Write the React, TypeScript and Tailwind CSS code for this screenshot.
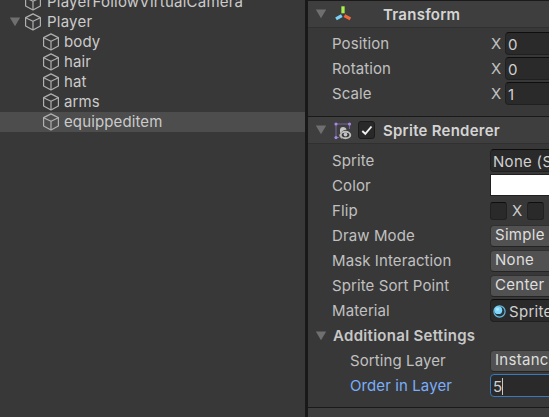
import type { ReactNode } from 'react';

function Fold({ className = '' }: { className?: string }) {
  return (
    <svg className={`h-[10px] w-[12px] shrink-0 ${className}`} viewBox="0 0 12 10">
      <path d="M.8 .6H11.2L6 9.3Z" fill="#6f6f6f" />
    </svg>
  );
}

function Cube() {
  return (
    <svg className="h-[18px] w-[18px] shrink-0" viewBox="0 0 18 18" fill="none" stroke="#b0b0b0" strokeWidth="1.2" strokeLinejoin="round">
      <path d="M9 .9L16.4 4.6V13L9 17L1.6 13V4.6Z" />
      <path d="M1.6 4.8L9 8.2L16.4 4.8M9 8.2V17" />
    </svg>
  );
}

function TransformIcon() {
  return (
    <svg className="h-[20px] w-[20px] shrink-0" viewBox="0 0 20 20" strokeWidth="3.3">
      <path d="M10 2.3V9.3" stroke="#a9f04d" />
      <path d="M8.8 11.6L3 14.9" stroke="#7bd0f5" />
      <path d="M11.4 11.6L17.4 14.9" stroke="#f0693c" />
    </svg>
  );
}

function SpriteIcon() {
  return (
    <svg className="h-[18px] w-[18px] shrink-0" viewBox="0 0 18 18">
      <path d="M2 2H15.5V7M2 2V15.5H5" fill="none" stroke="#79629f" strokeWidth="1.1" />
      <g fill="#a788e8">
        <circle cx="2" cy="2" r="1.6" />
        <circle cx="15.5" cy="2" r="1.6" />
        <circle cx="2" cy="15.6" r="1.6" />
      </g>
      <path d="M6 9.5V7.3Q6.4 5 9 5Q12 5 12.5 7.8Q8.5 8 6.2 11.5Z" fill="#c4c4c4" />
      <path d="M5.5 12.5Q6 15.5 8 16.4" stroke="#8e8e8e" strokeWidth="1.5" fill="none" />
      <ellipse cx="11.5" cy="13" rx="4.8" ry="3.3" fill="#383838" stroke="#bdbdbd" strokeWidth="1.9" />
      <circle cx="11.5" cy="12.6" r="1.9" fill="#c4c4c4" />
    </svg>
  );
}

function TreeRow({ name, depth = 0, open, selected }: { name: string; depth?: number; open?: boolean; selected?: boolean }) {
  return (
    <div className={`flex h-[20px] shrink-0 items-center pl-[9px] ${selected ? 'bg-[#4d4d4d]' : ''}`}>
      <span className="flex w-[15px] shrink-0">{open && <Fold />}</span>
      {depth > 0 && <span className="w-[18px] shrink-0" />}
      <Cube />
      <span className={depth > 0 ? 'ml-[4px] tracking-[0.12px]' : 'ml-[5px] tracking-[0.22px]'}>{name}</span>
    </div>
  );
}

function Row({ label, nested, active, children }: { label: string; nested?: boolean; active?: boolean; children: ReactNode }) {
  return (
    <div className="flex h-[25px]">
      <span className={`w-[182px] shrink-0 leading-[24px] tracking-[0.1px] ${nested ? 'pl-[42px]' : 'pl-[24px]'} ${active ? 'text-[#7baefa]' : 'text-[#c0c0c0]'}`}>{label}</span>
      {children}
    </div>
  );
}

function Field({ children }: { children: ReactNode }) {
  return (
    <div className="flex h-[23px] w-[120px] shrink-0 items-center rounded-[4px] border border-[#202020] border-t-[#0e0e0e] bg-[#2a2a2a] pl-[2px] pt-[2px] text-[#d0d0d0]">
      {children}
    </div>
  );
}

function Select({ value }: { value: string }) {
  return (
    <div className="mt-px flex h-[22px] w-[120px] shrink-0 items-center rounded-[4px] border border-[#303030] border-b-[#242424] bg-[#515151] pb-[2px] pl-[4px] text-[#dedede]">
      {value}
    </div>
  );
}

function Box({ className = '' }: { className?: string }) {
  return <span className={`h-[18px] w-[17px] shrink-0 rounded-[3px] border border-[#212121] border-t-[#0e0e0e] bg-[#2a2a2a] ${className}`} />;
}

function Header({ title, children }: { title: string; children: ReactNode }) {
  return (
    <div className="flex h-[27px] items-center border-b border-[#303030] bg-[#3e3e3e] pl-[7px]">
      <Fold />
      <div className="flex w-[56px] shrink-0 items-center">{children}</div>
      <span className="pt-[2px] font-semibold tracking-[0.25px] text-[#d4d4d4]">{title}</span>
    </div>
  );
}

function Axis({ value }: { value: string }) {
  return (
    <>
      <span className="w-[15px] shrink-0 pl-px leading-[24px] text-[#c0c0c0]">X</span>
      <Field>{value}</Field>
    </>
  );
}

export default function App() {
  return (
    <div className="flex h-[417px] w-[549px] overflow-hidden whitespace-nowrap bg-[#383838] font-['Inter',sans-serif] text-[15px] leading-[20px] tracking-[0.3px] text-[#cbcbcb]">
      <div className="flex h-full w-[305px] shrink-0 flex-col overflow-hidden">
        <div className="-mt-[8px] flex flex-col">
          <TreeRow name="PlayerFollowVirtualCamera" />
          <TreeRow name="Player" open />
          <TreeRow name="body" depth={1} />
          <TreeRow name="hair" depth={1} />
          <TreeRow name="hat" depth={1} />
          <TreeRow name="arms" depth={1} />
          <TreeRow name="equippeditem" depth={1} selected />
        </div>
      </div>
      <div className="h-full w-[3px] shrink-0 bg-[#191919]" />
      <div className="h-full w-[241px] overflow-hidden">
        <section className="border-t border-[#1a1a1a]">
          <Header title="Transform">
            <span className="ml-[6px] flex"><TransformIcon /></span>
          </Header>
          <div className="h-[88px] pt-[4px]">
            <Row label="Position"><Axis value="0" /></Row>
            <Row label="Rotation"><Axis value="0" /></Row>
            <Row label="Scale"><Axis value="1" /></Row>
          </div>
        </section>
        <section className="border-t border-[#1a1a1a]">
          <Header title="Sprite Renderer">
            <span className="ml-[7px] flex pt-px"><SpriteIcon /></span>
            <span className="ml-[6px] flex h-[18px] w-[17px] items-center justify-center rounded-[3px] border border-[#1b1b1b] bg-[#292929]">
              <svg className="h-[11px] w-[12px] shrink-0" viewBox="0 0 12 11">
                <path d="M1.3 6L4.3 8.8L10.5 1.5" fill="none" stroke="#f0f0f0" strokeWidth="1.9" />
              </svg>
            </span>
          </Header>
          <div className="h-[263px] pt-[5px]">
            <Row label="Sprite"><Field>None (Sprite)</Field></Row>
            <Row label="Color">
              <div className="h-[22px] w-[120px] shrink-0 border border-[#202020] bg-white" />
            </Row>
            <Row label="Flip">
              <Box className="mt-[3px]" />
              <span className="w-[20px] shrink-0 pl-[5px] leading-[24px]">X</span>
              <Box className="mt-[3px]" />
            </Row>
            <Row label="Draw Mode"><Select value="Simple" /></Row>
            <Row label="Mask Interaction"><Select value="None" /></Row>
            <Row label="Sprite Sort Point"><Select value="Center" /></Row>
            <Row label="Material">
              <Field>
                <svg className="mr-[3px] h-[13px] w-[13px] shrink-0" viewBox="0 0 13 13">
                  <circle cx="6.5" cy="6.5" r="5.6" fill="#253842" stroke="#6bb7da" strokeWidth="1.2" />
                  <circle cx="5.3" cy="5.2" r="3.9" fill="#7fd6fd" />
                  <circle cx="4.6" cy="4.3" r="1.4" fill="#b5e8fe" />
                </svg>
                Sprites-Default
              </Field>
            </Row>
            <div className="flex h-[25px] items-center pb-[2px] pl-[7px]">
              <Fold />
              <span className="ml-[6px] font-semibold text-[#c8c8c8]">Additional Settings</span>
            </div>
            <Row label="Sorting Layer" nested><Select value="Instances" /></Row>
            <Row label="Order in Layer" nested active>
              <div className="flex h-[23px] w-[120px] shrink-0 items-center rounded-[4px] border border-[#3a79bb] bg-[#2a2a2a] pl-[2px] pt-[2px] text-[#d0d0d0]">
                5<span className="h-[17px] w-px bg-[#c8c8c8]" />
              </div>
            </Row>
          </div>
        </section>
        <div className="h-[10px] border-t border-[#1a1a1a] bg-[#3e3e3e]" />
      </div>
    </div>
  );
}
